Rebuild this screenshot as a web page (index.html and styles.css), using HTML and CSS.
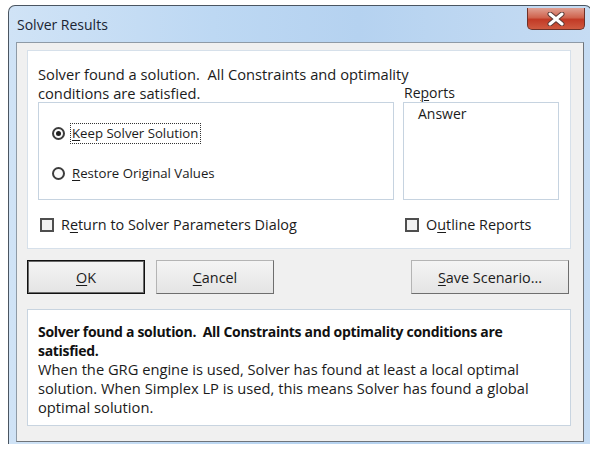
FILE: index.html
```html
<!DOCTYPE html>
<html lang="en">
<head>
    <meta charset="UTF-8">
    <title>Solver Results</title>
    <link rel="stylesheet" href="styles.css">
</head>
<body>
    <div class="window">
        <div class="titlebar">
            <span class="title">Solver Results</span>
            <div class="close">
                <svg width="18" height="14" viewBox="0 0 18 14">
                    <path d="M3 2 L15 12 M15 2 L3 12" stroke="#5a3a36" stroke-width="5" stroke-linecap="round"/>
                    <path d="M3 2 L15 12 M15 2 L3 12" stroke="#ffffff" stroke-width="3" stroke-linecap="round"/>
                </svg>
            </div>
        </div>

        <div class="client">
            <div class="group">
                <p class="message">Solver found a solution.&nbsp; All Constraints and optimality<br>conditions are satisfied.</p>
                <div class="reports-label">Re<u>p</u>orts</div>

                <div class="options">
                    <div class="radio-row">
                        <span class="radio checked"></span>
                        <span class="radio-label focused"><u>K</u>eep Solver Solution</span>
                    </div>
                    <div class="radio-row">
                        <span class="radio"></span>
                        <span class="radio-label"><u>R</u>estore Original Values</span>
                    </div>
                </div>

                <div class="listbox">
                    <div class="list-item">Answer</div>
                </div>

                <div class="check-row">
                    <span class="checkbox"></span>
                    <span>R<u>e</u>turn to Solver Parameters Dialog</span>
                </div>
                <div class="check-row">
                    <span class="checkbox"></span>
                    <span>O<u>u</u>tline Reports</span>
                </div>
            </div>

            <div class="buttons">
                <div class="button default"><u>O</u>K</div>
                <div class="button"><u>C</u>ancel</div>
                <div class="button wide"><u>S</u>ave Scenario...</div>
            </div>

            <div class="info">
                <p class="info-title">Solver found a solution.&nbsp; All Constraints and optimality conditions are<br>satisfied.</p>
                <p class="info-text">When the GRG engine is used, Solver has found at least a local optimal<br>solution. When Simplex LP is used, this means Solver has found a global<br>optimal solution.</p>
            </div>
        </div>
    </div>
</body>
</html>
```

FILE: styles.css
```css
html, body {
    margin: 0;
    padding: 0;
    background: #ffffff;
    overflow: hidden;
}
body {
    width: 590px;
    height: 449px;
    padding-top: 5px;
    box-sizing: border-box;
    font-family: "Open Sans", "Noto Sans", sans-serif;
    font-size: 14.4px;
    line-height: 19px;
    color: #1b1b1b;
}
p {
    margin: 0;
}
u {
    text-decoration-thickness: 1px;
    text-underline-offset: 2px;
}
.window {
    margin-left: 8px;
    width: 584px;
    box-sizing: border-box;
    padding: 0 7px 2px 7px;
    border: 1px solid #4a5561;
    border-bottom: none;
    border-radius: 7px 7px 0 0;
    background: linear-gradient(to right, #d0e3f6, #bdd8f3 35%, #b5d2f0 60%, #c6dcf3);
}
.titlebar {
    height: 36px;
    display: flex;
    align-items: flex-start;
}
.title {
    margin-top: 9px;
    margin-left: 1px;
    font-size: 14px;
    color: #1a2432;
}
.close {
    margin-left: auto;
    margin-top: 2px;
    margin-right: -1px;
    width: 58px;
    height: 22px;
    box-sizing: border-box;
    border: 1px solid #6e3128;
    border-top: none;
    border-radius: 0 0 5px 5px;
    background: linear-gradient(#e0a193, #d0644f 45%, #c23a26 55%, #cf5a40);
    display: flex;
    justify-content: center;
    align-items: center;
}
.client {
    height: 400px;
    box-sizing: border-box;
    padding: 7px 12px 0 10px;
    background: #f0f0f0;
    border: 1px solid #8e9aa6;
    border-right-color: #6f747a;
    border-bottom-color: #6f747a;
}
.group {
    height: 199px;
    box-sizing: border-box;
    padding: 13px 11px 0 10px;
    background: #ffffff;
    border: 1px solid #d6e0ea;
    display: grid;
    grid-template-columns: 356px 156px;
    grid-template-rows: 38px 98px auto;
    column-gap: 9px;
}
.message {
    grid-column: 1 / 3;
    grid-row: 1;
    padding-top: 1px;
    font-size: 14.7px;
}
.reports-label {
    grid-column: 2;
    grid-row: 1;
    align-self: end;
    margin-left: 1px;
    font-size: 14px;
}
.options, .listbox {
    grid-row: 2;
    border: 1px solid #c6d3e0;
    background: #ffffff;
}
.options {
    grid-column: 1;
    padding: 20px 0 0 13px;
    display: flex;
    flex-direction: column;
    gap: 19px;
}
.radio-row {
    height: 21px;
    display: flex;
    align-items: center;
}
.radio {
    width: 13px;
    height: 13px;
    box-sizing: border-box;
    border: 2px solid #3c3c3c;
    border-radius: 50%;
    background: #fafafa;
    display: flex;
    justify-content: center;
    align-items: center;
}
.radio.checked::after {
    content: "";
    width: 5px;
    height: 5px;
    border-radius: 50%;
    background: #1e1e1e;
}
.radio-label {
    margin-left: 5px;
    padding: 0 2px 0 1px;
    height: 21px;
    box-sizing: border-box;
    border: 1px solid transparent;
    font-size: 13.2px;
    line-height: 19px;
}
.radio-label.focused {
    border: 1px dotted #333333;
}
.listbox {
    grid-column: 2;
    padding: 1px 0 0 14px;
    font-size: 14px;
}
.check-row {
    grid-row: 3;
    align-self: start;
    margin-top: 15px;
    margin-left: 2px;
    display: flex;
    align-items: center;
    gap: 7px;
}
.checkbox {
    width: 14px;
    height: 14px;
    box-sizing: border-box;
    border: 2px solid #4e4e4e;
    background: #f2f2f2;
}
.buttons {
    margin-top: 11px;
    width: 543px;
    display: flex;
    gap: 11px;
}
.button {
    width: 118px;
    height: 34px;
    box-sizing: border-box;
    border: 1px solid #b4b4b4;
    border-right-color: #6e6e6e;
    border-bottom-color: #6e6e6e;
    background: linear-gradient(#f4f4f4, #e4e4e4);
    display: flex;
    justify-content: center;
    align-items: center;
}
.button.default {
    border: 1px solid #111111;
    box-shadow: inset 0 0 0 1px #6a6a6a;
}
.button.wide {
    width: 158px;
    margin-left: auto;
    margin-right: 1px;
}
.info {
    margin-top: 15px;
    width: 544px;
    height: 117px;
    box-sizing: border-box;
    padding: 12px 10px 0 10px;
    background: #ffffff;
    border: 1px solid #c8d4e0;
}
.info-title {
    font-weight: bold;
    font-size: 14px;
    letter-spacing: -0.3px;
    color: #111111;
}
.info-text {
    font-size: 14.7px;
}
```
